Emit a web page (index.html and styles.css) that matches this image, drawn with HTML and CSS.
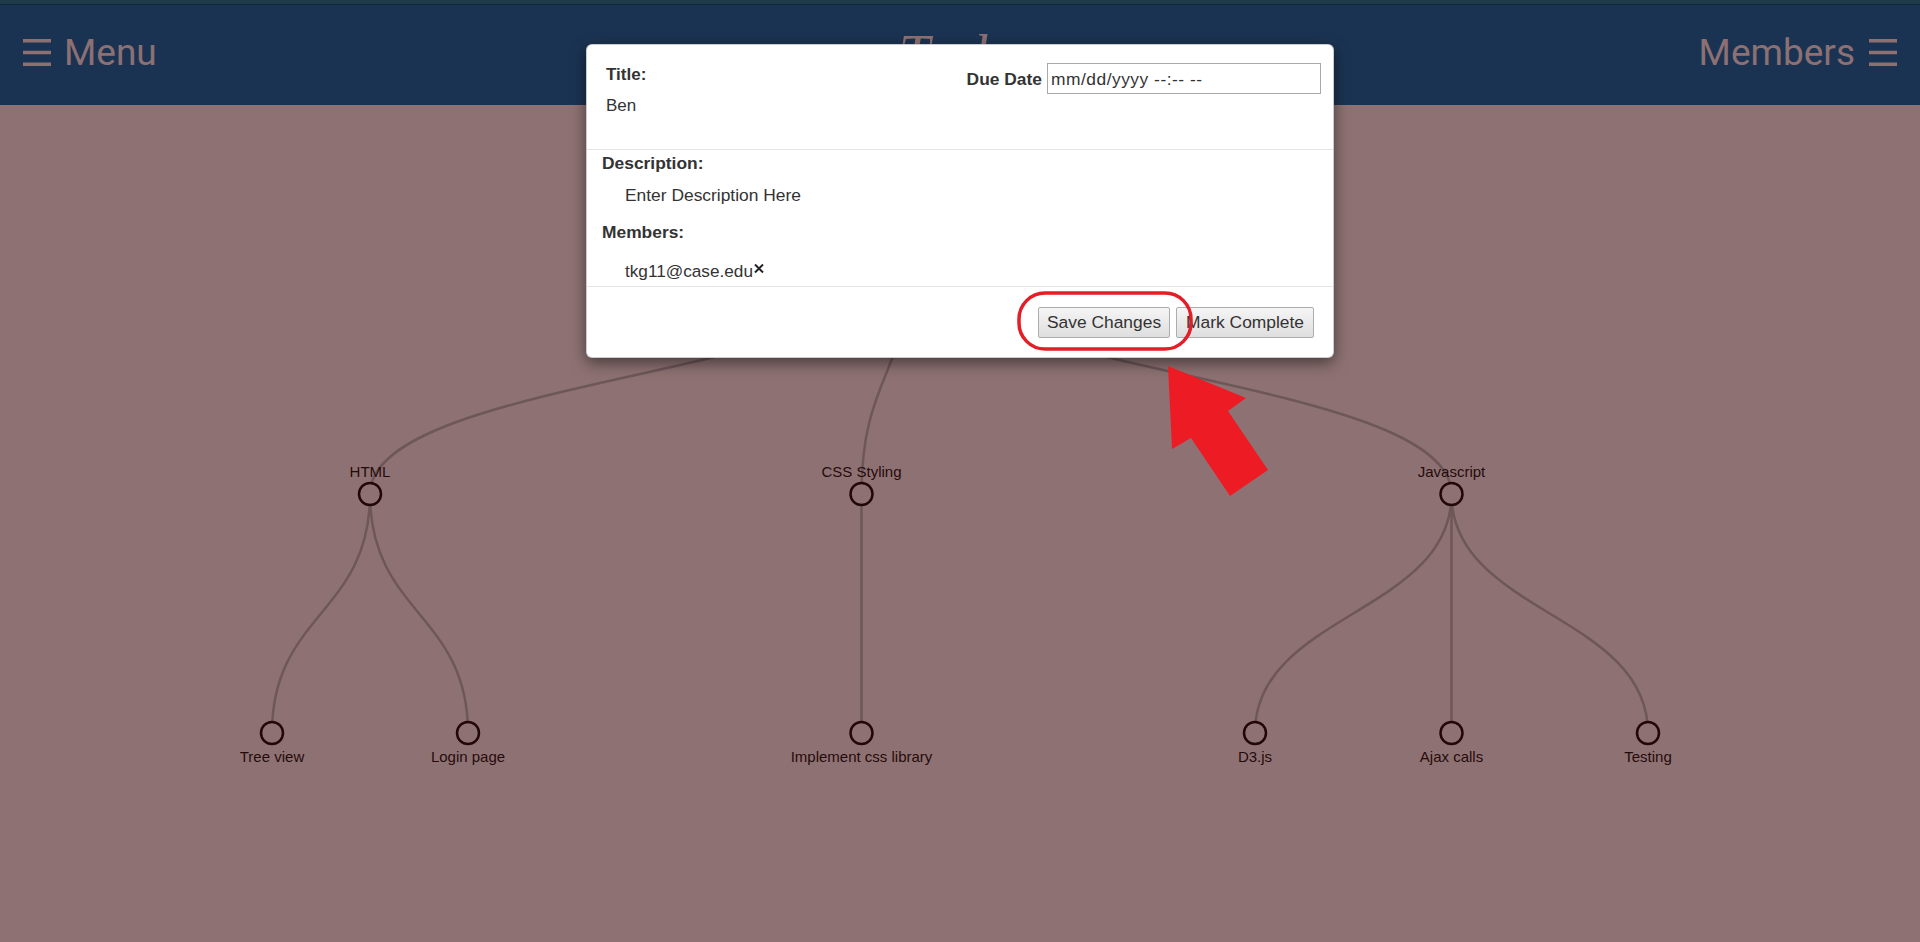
FILE: index.html
```html
<!DOCTYPE html>
<html lang="en">
<head>
<meta charset="utf-8">
<title>Tasks</title>
<link rel="stylesheet" href="styles.css">
</head>
<body>
<header class="topbar">
  <div class="nav nav-left">
    <svg class="burger" viewBox="0 0 28 27" width="28" height="27"><rect x="0" y="0" width="28" height="3.5"/><rect x="0" y="11.75" width="28" height="3.5"/><rect x="0" y="23.5" width="28" height="3.5"/></svg>
    <span>Menu</span>
  </div>
  <h1 class="brand">Tasks</h1>
  <div class="nav nav-right">
    <span>Members</span>
    <svg class="burger" viewBox="0 0 28 27" width="28" height="27"><rect x="0" y="0" width="28" height="3.5"/><rect x="0" y="11.75" width="28" height="3.5"/><rect x="0" y="23.5" width="28" height="3.5"/></svg>
  </div>
</header>

<main class="canvas">
  <svg class="tree" width="1920" height="837" viewBox="0 105 1920 837">
    <g class="links">
      <path d="M910.5,254C910.5,374 370,374 370,494"/>
      <path d="M910.5,254C910.5,374 861.5,374 861.5,494"/>
      <path d="M910.5,254C910.5,374 1451.5,374 1451.5,494"/>
      <path d="M370,494C370,613.5 272,613.5 272,733"/>
      <path d="M370,494C370,613.5 468,613.5 468,733"/>
      <path d="M861.5,494C861.5,613.5 861.5,613.5 861.5,733"/>
      <path d="M1451.5,494C1451.5,613.5 1255,613.5 1255,733"/>
      <path d="M1451.5,494C1451.5,613.5 1451.5,613.5 1451.5,733"/>
      <path d="M1451.5,494C1451.5,613.5 1648,613.5 1648,733"/>
    </g>
    <g class="nodes">
      <circle cx="910.5" cy="254" r="11"/><text x="910.5" y="237">Project</text>
      <circle cx="370" cy="494" r="11"/><text x="370" y="477">HTML</text>
      <circle cx="861.5" cy="494" r="11"/><text x="861.5" y="477">CSS Styling</text>
      <circle cx="1451.5" cy="494" r="11"/><text x="1451.5" y="477">Javascript</text>
      <circle cx="272" cy="733" r="11"/><text x="272" y="762">Tree view</text>
      <circle cx="468" cy="733" r="11"/><text x="468" y="762">Login page</text>
      <circle cx="861.5" cy="733" r="11"/><text x="861.5" y="762">Implement css library</text>
      <circle cx="1255" cy="733" r="11"/><text x="1255" y="762">D3.js</text>
      <circle cx="1451.5" cy="733" r="11"/><text x="1451.5" y="762">Ajax calls</text>
      <circle cx="1648" cy="733" r="11"/><text x="1648" y="762">Testing</text>
    </g>
  </svg>
</main>

<div class="modal">
  <div class="modal-header">
    <div class="title-block">
      <div class="label label-sm">Title:</div>
      <div class="title-value">Ben</div>
    </div>
    <div class="due">
      <span class="label">Due Date</span>
      <input class="due-input" type="text" value="mm/dd/yyyy --:-- --">
    </div>
  </div>
  <div class="modal-body">
    <div class="label">Description:</div>
    <div class="desc">Enter Description Here</div>
    <div class="label members-label">Members:</div>
    <div class="member">tkg11@case.edu<svg class="remove" viewBox="0 0 10 9" width="10" height="9"><path d="M1,0.5L9,8.5M9,0.5L1,8.5"/></svg></div>
  </div>
  <div class="modal-footer">
    <button class="btn" type="button">Save Changes</button>
    <button class="btn btn-wide" type="button">Mark Complete</button>
  </div>
</div>

<svg class="annotation" width="1920" height="942" viewBox="0 0 1920 942">
  <rect class="ring" x="1019" y="293" width="172" height="56" rx="26" ry="26"/>
  <polygon class="arrow" points="1168,366 1246,398 1228,411 1268,470 1230,496 1191,438 1172,449"/>
</svg>
</body>
</html>
```

FILE: styles.css
```css
html, body {
  margin: 0;
  padding: 0;
}

body {
  position: relative;
  width: 1920px;
  height: 942px;
  overflow: hidden;
  background: #8e7273;
  font-family: "Liberation Sans", Arial, sans-serif;
}

.topbar {
  box-sizing: border-box;
  height: 105px;
  border-top: 4px solid #1f3b4a;
  background: linear-gradient(#13283b 0 1px, #1b3352 1px);
  display: grid;
  grid-template-columns: 1fr auto 1fr;
  align-items: center;
  padding: 0 23px 5px 23px;
  color: #8c7072;
  font-family: Roboto, "Noto Sans", sans-serif;
}

.nav {
  display: flex;
  align-items: center;
  font-size: 37px;
  line-height: 1;
}

.nav-left {
  gap: 13px;
  justify-self: start;
}

.nav-right {
  gap: 14px;
  justify-self: end;
}

.burger {
  display: block;
  fill: #8c7072;
}

.brand {
  margin: 0;
  font-family: "Liberation Serif", serif;
  font-style: italic;
  font-weight: normal;
  font-size: 56px;
  line-height: 1;
  color: #8c7072;
  padding-top: 6px;
}

.canvas {
  display: block;
}

.tree {
  display: block;
}

.links path {
  fill: none;
  stroke: #6d5759;
  stroke-width: 2.5;
}

.nodes circle {
  fill: #8e7273;
  stroke: #210808;
  stroke-width: 2.5;
}

.nodes text {
  font-family: "Liberation Sans", Arial, sans-serif;
  font-size: 15px;
  fill: #260b0b;
  text-anchor: middle;
}

/* Modal dialog */
.modal {
  position: absolute;
  left: 586px;
  top: 44px;
  width: 748px;
  box-sizing: border-box;
  background: #fff;
  border: 1px solid rgba(0, 0, 0, 0.2);
  border-radius: 6px;
  box-shadow: 0 5px 15px rgba(0, 0, 0, 0.5);
  color: #333;
  font-family: "Liberation Sans", Arial, sans-serif;
}

.modal-header {
  box-sizing: border-box;
  height: 105px;
  border-bottom: 1px solid #e5e5e5;
  display: flex;
  justify-content: space-between;
  align-items: flex-start;
  padding: 0 12px 0 19px;
}

.title-block {
  padding-top: 21px;
}

.label {
  font-weight: bold;
  font-size: 17.4px;
  line-height: 20px;
  color: #333;
}

.label-sm {
  font-size: 17px;
  line-height: 18px;
}

.title-value {
  margin-top: 12px;
  font-size: 17px;
  line-height: 20px;
}

.due {
  margin-top: 18px;
  display: flex;
  align-items: center;
  gap: 5px;
}

.due-input {
  box-sizing: border-box;
  width: 274px;
  height: 31px;
  margin: 0;
  padding: 1px 3px 0;
  border: 1px solid #a9a9a9;
  border-radius: 0;
  font-family: "Liberation Sans", Arial, sans-serif;
  font-size: 17.4px;
  letter-spacing: 0.5px;
  color: #333;
  background: #fff;
}

.modal-body {
  padding: 3px 15px 5px 15px;
}

.desc {
  margin: 12px 0 0 23px;
  font-size: 17.4px;
  line-height: 20px;
}

.members-label {
  margin-top: 17px;
}

.member {
  margin: 19px 0 0 23px;
  font-size: 17.2px;
  line-height: 20px;
  display: flex;
  align-items: flex-start;
}

.remove {
  display: block;
  margin: 3px 0 0 1px;
  fill: none;
  stroke: #222;
  stroke-width: 2;
}

.modal-footer {
  border-top: 1px solid #e5e5e5;
  padding: 20px 19px 19px 15px;
  display: flex;
  justify-content: flex-end;
  gap: 6px;
}

.btn {
  box-sizing: border-box;
  height: 31px;
  margin: 0;
  padding: 0 8px;
  border: 1px solid #adadad;
  border-radius: 2px;
  background: linear-gradient(#f5f5f5, #dedede);
  color: #333;
  font-family: "Liberation Sans", Arial, sans-serif;
  font-size: 17.4px;
  line-height: 29px;
}

.btn-wide {
  padding: 0 9px;
}

/* Annotation overlay */
.annotation {
  position: absolute;
  left: 0;
  top: 0;
  pointer-events: none;
}

.ring {
  fill: none;
  stroke: #e31e26;
  stroke-width: 3.5;
}

.arrow {
  fill: #ed1c24;
}
```
